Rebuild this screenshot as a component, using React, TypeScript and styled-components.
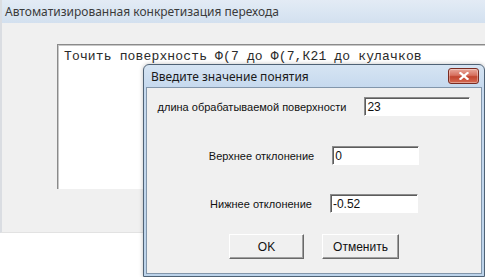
import * as React from 'react';
import styled, { createGlobalStyle } from 'styled-components';

const GlobalStyle = createGlobalStyle`
  html, body {
    margin: 0;
    padding: 0;
    background: #fff;
  }
`;

const Page = styled.div`
  position: relative;
  width: 485px;
  height: 277px;
  overflow: hidden;
  background: #fff;
`;

const Screen = styled.div`
  display: flex;
  height: 233px;
`;

const DesktopEdge = styled.div`
  width: 3px;
  background: linear-gradient(90deg, #3c3c3c 0, #5a5f68 2px, #9aa0a8 3px);
`;

const Window = styled.div`
  flex: 1;
  display: flex;
  flex-direction: column;
  background: #f0f0f0;
  border-left: 2px solid #dadde2;
  border-bottom: 1px solid #e2e2e2;
`;

const TitleBar = styled.div`
  height: 23px;
  display: flex;
  align-items: center;
  padding-left: 3px;
  background: linear-gradient(180deg, #e3ebf5 0%, #d9e5f2 60%, #d3e0ef 100%);
  font-family: 'Noto Sans', 'Open Sans', sans-serif;
  font-size: 12px;
  color: #3b3b3b;
  white-space: nowrap;
`;

const WindowBody = styled.div`
  flex: 1;
  padding: 21px 0 0 55px;
`;

const Memo = styled.div`
  width: 470px;
  height: 145px;
  box-sizing: border-box;
  background: #fff;
  border-top: 1px solid #8a8a8a;
  border-left: 1px solid #8a8a8a;
  box-shadow: inset 1px 1px 0 #c8c8c8;
  padding: 4px 0 0 6px;
  font-family: 'Liberation Mono', 'Courier New', monospace;
  font-size: 13px;
  line-height: 15px;
  letter-spacing: 0.15px;
  color: #2a2a2a;
  white-space: nowrap;
`;

const Dialog = styled.div`
  position: absolute;
  left: 143px;
  top: 64px;
  width: 342px;
  height: 213px;
  box-sizing: border-box;
  display: flex;
  flex-direction: column;
  border: 1px solid #4f6275;
  border-radius: 6px 6px 0 0;
  background: linear-gradient(180deg, #d6e4f3 0, #c6d9ee 22px, #bcd3ea 100%);
  padding: 0 2px 2px;
  box-shadow: 0 0 4px rgba(0, 0, 0, 0.25);
`;

const DialogTitle = styled.div`
  height: 22px;
  display: flex;
  align-items: center;
  justify-content: space-between;
  padding: 0 3px 0 5px;
  font-family: 'Noto Sans', 'Open Sans', sans-serif;
  font-size: 12px;
  color: #1a1a1a;
`;

const CloseButton = styled.div`
  width: 31px;
  height: 16px;
  box-sizing: border-box;
  display: flex;
  align-items: center;
  justify-content: center;
  border: 1px solid #7a2c22;
  border-radius: 3px;
  background: linear-gradient(180deg, #e9a99c 0%, #d7705f 45%, #c2452f 55%, #d66a52 100%);
  box-shadow: inset 0 0 0 1px rgba(255, 255, 255, 0.35);
`;

const CloseSvg = styled.svg`
  width: 10px;
  height: 8px;
  stroke: #fff;
  stroke-width: 2.2;
  stroke-linecap: square;
  fill: none;
`;

const DialogBody = styled.div`
  flex: 1;
  display: flex;
  flex-direction: column;
  box-sizing: border-box;
  border: 1px solid #8296ab;
  background: #f0f0f0;
  padding: 9px 0 0 0;
  font-family: 'Liberation Sans', Arial, sans-serif;
  font-size: 11px;
  color: #111;
`;

const FieldRow = styled.div<{ gapAfter: number }>`
  display: flex;
  justify-content: center;
  align-items: center;
  gap: 18px;
  height: 19px;
  margin-bottom: ${p => p.gapAfter}px;
`;

const Label = styled.span`
  white-space: nowrap;
`;

const Field = styled.input<{ w: number }>`
  width: ${p => p.w}px;
  height: 19px;
  box-sizing: border-box;
  margin: 0;
  padding: 1px 2px 0;
  border: 1px solid #fff;
  border-top-color: #8c8c8c;
  border-left-color: #8c8c8c;
  box-shadow: inset 1px 1px 0 #5c5c5c;
  background: #fff;
  font-family: 'Liberation Sans', Arial, sans-serif;
  font-size: 12px;
  color: #111;
  outline: none;
`;

const ButtonRow = styled.div`
  display: flex;
  justify-content: center;
  gap: 18px;
`;

const Button = styled.button<{ w: number }>`
  width: ${p => p.w}px;
  height: 25px;
  box-sizing: border-box;
  margin: 0;
  padding: 0;
  background: #f0f0f0;
  border: 1px solid #fff;
  border-right-color: #696969;
  border-bottom-color: #696969;
  box-shadow: inset -1px -1px 0 #a0a0a0;
  font-family: 'Liberation Sans', Arial, sans-serif;
  font-size: 12px;
  color: #111;
`;

const fields = [
  { label: 'длина обрабатываемой поверхности', value: '23', w: 106, gapAfter: 30 },
  { label: 'Верхнее отклонение', value: '0', w: 87, gapAfter: 29 },
  { label: 'Нижнее отклонение', value: '-0.52', w: 88, gapAfter: 21 },
];

export default function App() {
  return (
    <Page>
      <GlobalStyle />
      <Screen>
        <DesktopEdge />
        <Window>
          <TitleBar>Автоматизированная конкретизация перехода</TitleBar>
          <WindowBody>
            <Memo>Точить поверхность Ф(7 до Ф(7,К21 до кулачков</Memo>
          </WindowBody>
        </Window>
      </Screen>
      <Dialog>
        <DialogTitle>
          <span>Введите значение понятия</span>
          <CloseButton>
            <CloseSvg viewBox='0 0 10 8'>
              <line x1='1.5' y1='1' x2='8.5' y2='7' />
              <line x1='8.5' y1='1' x2='1.5' y2='7' />
            </CloseSvg>
          </CloseButton>
        </DialogTitle>
        <DialogBody>
          {fields.map(f => (
            <FieldRow key={f.label} gapAfter={f.gapAfter}>
              <Label>{f.label}</Label>
              <Field w={f.w} defaultValue={f.value} readOnly />
            </FieldRow>
          ))}
          <ButtonRow>
            <Button w={75}>OK</Button>
            <Button w={77}>Отменить</Button>
          </ButtonRow>
        </DialogBody>
      </Dialog>
    </Page>
  );
}
